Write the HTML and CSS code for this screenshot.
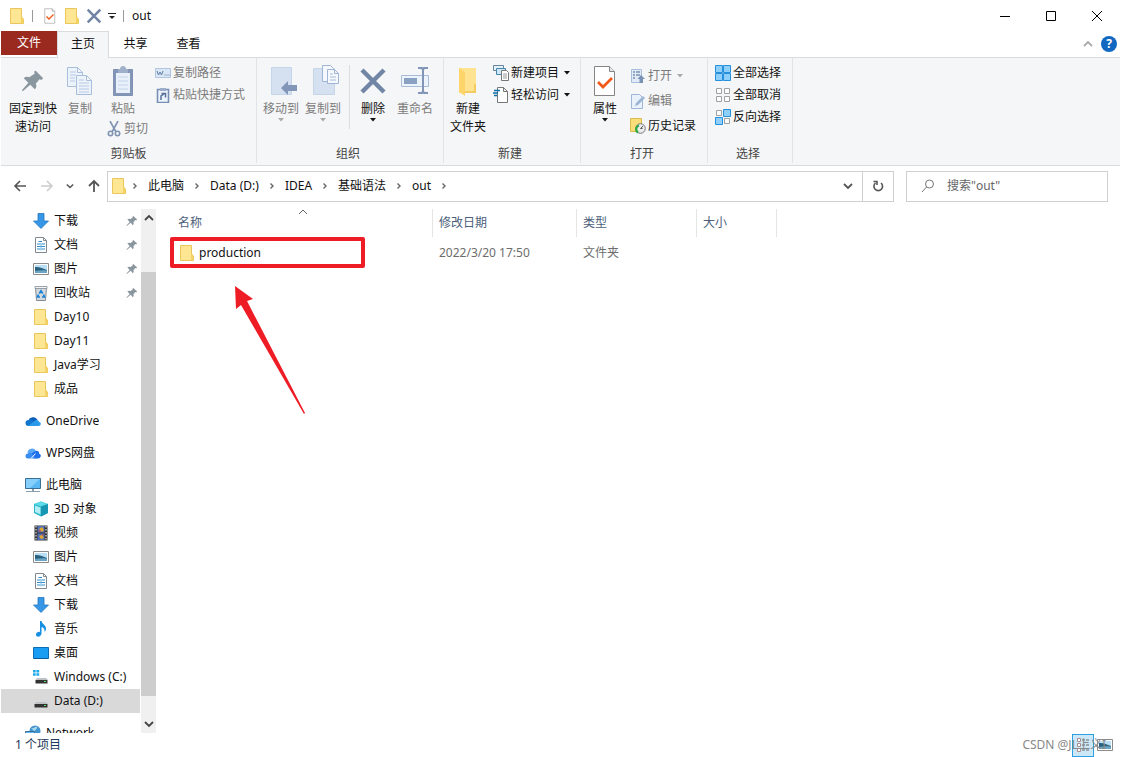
FILE: index.html
```html
<!DOCTYPE html>
<html lang="zh-CN">
<head>
<meta charset="utf-8">
<title>out</title>
<link rel="stylesheet" href="styles.css">
</head>
<body>
<svg class="sprite" aria-hidden="true">
  <symbol id="folder" viewBox="0 0 16 16"><path d="M1.500 .5h11v9l2 1.500v4.500h-13z" fill="#ffe693" stroke="#e9c75c"/><path d="M12 9.500l1.500-.5 1 2v4.500H12z" fill="#f5d264"/></symbol>
  <symbol id="chev-r" viewBox="0 0 8 8"><path d="M2.500 1.500L5 4 2.500 6.500" fill="none" stroke="#666" stroke-width="1.400"/></symbol>
  <symbol id="chev-d" viewBox="0 0 10 10"><path d="M1 3l4 4 4-4" fill="none" stroke="currentColor" stroke-width="1.800"/></symbol>
  <symbol id="chev-u" viewBox="0 0 10 10"><path d="M1 7l4-4 4 4" fill="none" stroke="currentColor" stroke-width="1.800"/></symbol>
  <symbol id="caret" viewBox="0 0 6 4"><path d="M0 0h6L3 3.500z" fill="currentColor"/></symbol>
  <symbol id="pin" viewBox="4 3 26 26"><path d="M20 5l8 8-2 2-2-1-4 5c1 2 1 4-1 6l-5-5-8 7-1-1 7-8-5-5c2-2 4-2 6-1l6-4-1-2z" fill="#8a979e"/></symbol>
  <symbol id="download" viewBox="0 0 16 16"><path d="M5 .5h6V8h4.500L8 15.500.500 8H5z" fill="#3796e6" stroke="#1f77c4" stroke-width=".8"/></symbol>
  <symbol id="doc" viewBox="0 0 16 16"><path d="M2.500.5h8l3 3v12h-11z" fill="#fff" stroke="#808a92"/><path d="M10.500.5v3h3" fill="none" stroke="#808a92"/><path d="M5.500 4.500H9M4 7h3.500M8.500 7H12M4 9.500h8M4 12h3.500M8.500 12H12" stroke="#2f8fce" stroke-width="1.200"/><path d="M8 6v7.500" stroke="#7fbbe2"/></symbol>
  <symbol id="picture" viewBox="0 0 16 16"><path d="M.5 2.500h15v11H.5z" fill="#fff" stroke="#8b8b8b"/><path d="M2 4h12v8H2z" fill="#b9def5"/><path d="M2 6c4-.5 8 1.500 12 3v1H2z" fill="#2b617c"/><path d="M2 10c4-1 8-1 12-.5V12H2z" fill="#6aa5c4"/></symbol>
  <symbol id="bin" viewBox="0 0 16 16"><path d="M2.500 2.500h11L12.500 15.500h-9z" fill="#d3d9de" stroke="#858d94"/><path d="M2 1.500h12v2H2z" fill="#f2f4f5" stroke="#858d94" stroke-width=".8"/><path d="M6.300 8.500L8 5.800l1.700 2.700M10.500 9.500l1 2.500H9M7 12H4.500l1-2.500" fill="none" stroke="#1683d8" stroke-width="1.700"/></symbol>
  <symbol id="onedrive" viewBox="0 0 16 16"><path d="M4 6a5 4.500 0 0 1 8.500 1L5 12z" fill="#0b5eb8"/><path d="M3.500 7c2-1 3.500 0 5 1l2 5h-7A3 3 0 0 1 3.500 7z" fill="#1277d0"/><path d="M3 13l6-4.500C11 6 14 7 14 9c2.500 0 2.500 4-.5 4z" fill="#2a9bea"/></symbol>
  <symbol id="wps" viewBox="0 0 16 16"><path d="M2.500 8A4.500 4.500 0 0 1 11 6L7 10z" fill="#5aa8f6"/><path d="M9.500 6.500c3-2 5 0 4.500 2 3 1 2 5-1 5H9L6 9z" fill="#1f6fea"/><path d="M3 8.500c2-1.500 3.500 0 4.500 1l3.500 4H3a2.500 2.500 0 0 1 0-5z" fill="#3b8cf2"/><path d="M6 13.500l4.500-5" stroke="#fff"/></symbol>
  <symbol id="pc" viewBox="0 0 16 16"><path d="M.5 1.500h15v10H.5z" fill="#5ab8f4" stroke="#3b6e93"/><path d="M1 2h14L5 11H1z" fill="#86cefb"/><path d="M7 12h2v2H7z" fill="#8ba0ad"/><path d="M1 14.500h14" stroke="#8ba0ad"/></symbol>
  <symbol id="cube" viewBox="0 0 16 16"><path d="M1 3l7-2.500L15 3v9l-7 3.500L1 12z" fill="#25b6ca"/><path d="M1 3l7-2.500L15 3 8 5.500z" fill="#5edbe8"/><path d="M8 5.500L15 3v9l-7 3.500z" fill="#1797b4"/><path d="M2 4.500l5.500 2v7L2 11z" fill="#b5edf4"/></symbol>
  <symbol id="video" viewBox="0 0 16 16"><path d="M1.500.5h13v15h-13z" fill="#333"/><path d="M4.500 1h7v6.500h-7zM4.500 8.500h7V15h-7z" fill="#5271b8"/><path d="M6 4l3-2 2 3-2 2zM6 11l3-1 2 3-3 1z" fill="#e3a82b"/><path d="M5 6l2-1 1 2zM9 9l2 1-2 1z" fill="#c94c3d"/><path d="M3 1v14M13 1v14" stroke="#fff" stroke-dasharray="1.500 1.500"/></symbol>
  <symbol id="music" viewBox="0 0 16 16"><path d="M7 0h1.500c.5 3 4.500 4 4.500 7.500 0 1.500-.5 2.500-1.500 3.500.5-3-1-4.500-3-5v6.500C8.500 16 3 17 3 13.500 3 11.500 5.500 10.500 7 11z" fill="#168fe4"/></symbol>
  <symbol id="desktop" viewBox="0 0 16 16"><path d="M.5 2.500h15v11H.5z" fill="#189df3" stroke="#0b6db4"/><path d="M1 13.500h14" stroke="#075b9a"/></symbol>
  <symbol id="drive" viewBox="0 0 16 16"><path d="M3 9h10l2 2H1.500z" fill="#bfc2c4"/><path d="M1.500 11h13v3.500h-13z" fill="#333"/><path d="M11 12.500h2" stroke="#4fe265"/></symbol>
  <symbol id="windrive" viewBox="0 0 16 16"><path d="M0 1h2.700v2.500H0zM3.400 1h2.800v2.500H3.400zM0 4.200h2.700v2.500H0zM3.400 4.200h2.800v2.500H3.400z" fill="#1ba9ea"/><path d="M4 9h9l2 2H2.500z" fill="#bfc2c4"/><path d="M2.500 11h12v3.500h-12z" fill="#333"/><path d="M11 12.500h2" stroke="#4fe265"/></symbol>
  <symbol id="network" viewBox="0 0 16 16"><circle cx="10" cy="6" r="5.500" fill="#4194cf"/><path d="M6 3c3 1 4-2 6-1 1 2-3 3-2 5z" fill="#a6d8e9"/><path d="M.5 6.500h9v6h-9z" fill="#5ab8f4" stroke="#3b6e93"/></symbol>
  <symbol id="page-check" viewBox="0 0 24 32"><path d="M1.500 1.500h15l5 5v24h-20z" fill="#fff" stroke="#858585"/><path d="M16.500 1.500v5h5" fill="#e8e8e8" stroke="#858585"/><path d="M5 17l5 5 9-9" fill="none" stroke="#f15a18" stroke-width="2.800"/></symbol>
  <symbol id="cross" viewBox="0 0 28 28"><path d="M3 3l22 22M25 3L3 25" fill="none" stroke="#7185a5" stroke-width="4.500"/></symbol>
  <symbol id="copy" viewBox="0 0 26 32"><g fill="#edf3fb" stroke="#a9bedc"><path d="M.5 2.500h10l5 5v14H.5zM10.500 2.500v5h5"/><path d="M9.500 10.500h10l5 5v14h-15zM19.500 10.500v5h5"/></g><path d="M3 7h6M3 10h6M3 13h5M3 16h5M12 15h5M12 18h10M12 21h10M12 24h10M12 27h10" stroke="#b8cae3"/></symbol>
  <symbol id="paste" viewBox="0 0 22 32"><path d="M1.500 4.500h19v26h-19z" fill="#8396b8" stroke="#7f92b3"/><path d="M4 8h14v20H4z" fill="#e8f0fa"/><path d="M6 4h2c0-4 6-4 6 0h2v4H6z" fill="#9eafc9"/><path d="M6 12h10M6 16h10M6 20h10M6 24h10" stroke="#c4d3e8"/></symbol>
  <symbol id="scissors" viewBox="0 0 16 16"><path d="M4 0l6 11M12 0L6 11" stroke="#7f94b2" stroke-width="1.600"/><g fill="none" stroke="#7f94b2" stroke-width="1.600"><circle cx="4.500" cy="12.500" r="2.200"/><circle cx="11.500" cy="12.500" r="2.200"/></g></symbol>
  <symbol id="path" viewBox="0 0 16 16"><path d="M.5 3.500h15v9H.5z" fill="#d9e6f5" stroke="#b3c5de"/><path d="M2 6l1.500 4L5 7l1.500 3L8 6M9.500 10h1M11.500 10h1M13.500 10h1" fill="none" stroke="#647fa7"/></symbol>
  <symbol id="shortcut" viewBox="0 0 16 16"><path d="M2.500 2.500h11v13h-11z" fill="#eef4fb" stroke="#788fb5" stroke-width="1.600"/><path d="M5 1h6v3H5z" fill="#9caccb"/><path d="M6 13V9l3-2M6.500 6.500h4v4" fill="none" stroke="#56709b" stroke-width="1.500"/></symbol>
  <symbol id="move" viewBox="-5 0 32 32"><path d="M1.500 2.500h20v27h-20z" fill="#d5e1f1" stroke="#c6d6ea"/><path d="M11 23l7-7v4h9v6h-9v4z" fill="#8296b7"/></symbol>
  <symbol id="copyto" viewBox="-5 0 32 32"><path d="M1.500 3.500h21v26h-21z" fill="#d5e1f1" stroke="#c6d6ea"/><g fill="#f5f9ff" stroke="#9fb5d6"><path d="M10.500.5h8l3 3v13h-11z"/><path d="M15.500 4.500h7l4 4v10h-11zM22.500 4.500v4h4"/></g><path d="M18 9h3M18 12h6M18 15h6" stroke="#a8bbd7"/></symbol>
  <symbol id="rename" viewBox="-1 0 30 32"><path d="M.5 10.500h27v11H.5z" fill="#edf3fb" stroke="#a8bcda"/><path d="M3 13h13v6H3z" fill="#8ba1c3"/><path d="M17 3h4l1 2 1-2h4M17 28h4l1-2 1 2h4M22 4v23" fill="none" stroke="#8095b8" stroke-width="2"/></symbol>
  <symbol id="bigfolder" viewBox="0 0 20 32"><path d="M1 3h17v25H1z" fill="#ffe391"/><path d="M1 3l6 4v24l-6-4z" fill="#ffd56b"/><path d="M16 18l2 2v8H7v-2h9z" fill="#f4cb5f"/></symbol>
  <symbol id="newitem" viewBox="0 0 16 16"><path d="M.5.500h10v5H.5z" fill="#e5f2fa" stroke="#67859a"/><path d="M3.500 3.500h9v6h-9z" fill="#cfe7f6" stroke="#4187ae"/><path d="M8.500 5.500h5l2 2v8h-7z" fill="#fff" stroke="#777"/><path d="M10 9h4M10 11h4M10 13h4" stroke="#999"/></symbol>
  <symbol id="easy" viewBox="0 0 16 16"><path d="M4.500.500h6l4 4v11h-10zM10.500.500v4h4" fill="#fff" stroke="#777"/><path d="M1 3.500h6M0 6h5M1 8.500h3" stroke="#0c6fa9" stroke-width="1.300"/></symbol>
  <symbol id="open" viewBox="0 0 16 16"><path d="M1.500 1.500h10v13h-10z" fill="#e1ebf7" stroke="#a8bddb"/><path d="M3 4h2M3 7h2M3 10h2M6 4h4M6 7h4" stroke="#7991b4" stroke-width="1.400"/><path d="M9.500 15v-4h-2l3.500-4 4 4h-2v4z" fill="#7991b4"/></symbol>
  <symbol id="edit" viewBox="0 0 16 16"><path d="M1.500 1.500h8l3 3v11h-11z" fill="#e9f1fb" stroke="#9fb6d8"/><path d="M5 13l1-3 7-7 2 2-7 7z" fill="#9db5d5"/></symbol>
  <symbol id="history" viewBox="0 0 16 16"><path d="M.5.500h11v13H.5z" fill="#f8dd78" stroke="#d9bb4d"/><circle cx="10.500" cy="10.500" r="4.800" fill="#ececec" stroke="#777"/><path d="M10.500 10.500L13 8M10.500 10.500h2" stroke="#555"/><path d="M8 14.500c-3-2-2-6 1-7" fill="none" stroke="#2aaa43" stroke-width="2.200"/></symbol>
  <symbol id="selall" viewBox="0 0 16 16"><path d="M.5.500h7v7h-7zM8.500.500h7v7h-7zM.5 8.500h7v7h-7zM8.500 8.500h7v7h-7z" fill="#8fd0fb" stroke="#2790dd"/></symbol>
  <symbol id="selnone" viewBox="0 0 16 16"><path d="M1.500 1.500h5v5h-5zM9.500 1.500h5v5h-5zM1.500 9.500h5v5h-5zM9.500 9.500h5v5h-5z" fill="#fff" stroke="#a0a0a0"/></symbol>
  <symbol id="selinv" viewBox="0 0 16 16"><path d="M1.500 1.500h5v5h-5zM9.500 9.500h5v5h-5z" fill="#fff" stroke="#a0a0a0"/><path d="M8.500.500h7v7h-7zM.5 8.500h7v7h-7z" fill="#8fd0fb" stroke="#2790dd"/></symbol>
</svg>

<div class="window">
  <header class="titlebar">
    <svg class="i16"><use href="#folder"/></svg>
    <span class="divider"></span>
    <div class="quick">
      <button aria-label="属性"><svg class="i16"><use href="#page-check"/></svg></button>
      <button aria-label="新建文件夹"><svg class="i16"><use href="#folder"/></svg></button>
      <button aria-label="删除"><svg class="i16"><use href="#cross"/></svg></button>
      <button aria-label="自定义"><svg class="i8" viewBox="0 0 8 8"><path d="M0 1.500h8" stroke="#222"/><path d="M1 4h6L4 7z" fill="#222"/></svg></button>
    </div>
    <span class="divider"></span>
    <h1 class="title">out</h1>
    <div class="winctl">
      <button aria-label="最小化"><svg class="i12" viewBox="0 0 12 12"><path d="M1 6.500h10" stroke="#000"/></svg></button>
      <button aria-label="最大化"><svg class="i12" viewBox="0 0 12 12"><path d="M1.500 1.500h9v9h-9z" fill="none" stroke="#000"/></svg></button>
      <button aria-label="关闭"><svg class="i12" viewBox="0 0 12 12"><path d="M1 1l10 10M11 1L1 11" stroke="#000"/></svg></button>
    </div>
  </header>

  <nav class="tabs">
    <button class="tab file">文件</button>
    <button class="tab active">主页</button>
    <button class="tab">共享</button>
    <button class="tab">查看</button>
    <div class="tabs-end">
      <button class="collapse" aria-label="折叠"><svg class="i10"><use href="#chev-u"/></svg></button>
      <button class="help" aria-label="帮助">?</button>
    </div>
  </nav>

  <section class="ribbon">
    <div class="group clip">
      <div class="tools">
        <button class="big wide"><svg class="i24"><use href="#pin"/></svg><span>固定到快<br>速访问</span></button>
        <button class="big narrow dim"><svg class="i32"><use href="#copy"/></svg><span>复制</span></button>
        <div class="stack">
          <button class="big dim"><svg class="i32"><use href="#paste"/></svg><span>粘贴</span></button>
          <button class="small dim"><svg class="i16"><use href="#scissors"/></svg>剪切</button>
        </div>
        <div class="list">
          <button class="small dim"><svg class="i16"><use href="#path"/></svg>复制路径</button>
          <button class="small dim"><svg class="i16"><use href="#shortcut"/></svg>粘贴快捷方式</button>
        </div>
      </div>
      <h2>剪贴板</h2>
    </div>
    <div class="group org">
      <div class="tools">
        <button class="big dim"><svg class="i32"><use href="#move"/></svg><span>移动到</span><svg class="caret"><use href="#caret"/></svg></button>
        <button class="big dim"><svg class="i32"><use href="#copyto"/></svg><span>复制到</span><svg class="caret"><use href="#caret"/></svg></button>
        <span class="rule"></span>
        <button class="big"><svg class="i28"><use href="#cross"/></svg><span>删除</span><svg class="caret"><use href="#caret"/></svg></button>
        <button class="big dim"><svg class="i32"><use href="#rename"/></svg><span>重命名</span></button>
      </div>
      <h2>组织</h2>
    </div>
    <div class="group new">
      <div class="tools">
        <button class="big"><svg class="i32"><use href="#bigfolder"/></svg><span>新建<br>文件夹</span></button>
        <div class="list">
          <button class="small"><svg class="i16"><use href="#newitem"/></svg>新建项目<svg class="caret"><use href="#caret"/></svg></button>
          <button class="small"><svg class="i16"><use href="#easy"/></svg>轻松访问<svg class="caret"><use href="#caret"/></svg></button>
        </div>
      </div>
      <h2>新建</h2>
    </div>
    <div class="group opn">
      <div class="tools">
        <button class="big"><svg class="i32"><use href="#page-check"/></svg><span>属性</span><svg class="caret"><use href="#caret"/></svg></button>
        <div class="list loose">
          <button class="small dim"><svg class="i16"><use href="#open"/></svg>打开<svg class="caret"><use href="#caret"/></svg></button>
          <button class="small dim"><svg class="i16"><use href="#edit"/></svg>编辑</button>
          <button class="small"><svg class="i16"><use href="#history"/></svg>历史记录</button>
        </div>
      </div>
      <h2>打开</h2>
    </div>
    <div class="group sel">
      <div class="tools">
        <div class="list">
          <button class="small"><svg class="i16"><use href="#selall"/></svg>全部选择</button>
          <button class="small"><svg class="i16"><use href="#selnone"/></svg>全部取消</button>
          <button class="small"><svg class="i16"><use href="#selinv"/></svg>反向选择</button>
        </div>
      </div>
      <h2>选择</h2>
    </div>
  </section>

  <section class="navbar">
    <div class="history">
      <button aria-label="后退"><svg class="i14" viewBox="0 0 14 14"><path d="M13 7H2M7 2L2 7l5 5" fill="none" stroke="#555" stroke-width="1.600"/></svg></button>
      <button aria-label="前进"><svg class="i14" viewBox="0 0 14 14"><path d="M1 7h11M7 2l5 5-5 5" fill="none" stroke="#ccc" stroke-width="1.600"/></svg></button>
      <button aria-label="最近位置"><svg class="i8"><use href="#chev-d"/></svg></button>
      <button aria-label="向上"><svg class="i14" viewBox="0 0 14 14"><path d="M7 13V2M2 7l5-5 5 5" fill="none" stroke="#555" stroke-width="1.800"/></svg></button>
    </div>
    <div class="address">
      <svg class="i16"><use href="#folder"/></svg>
      <svg class="sep first"><use href="#chev-r"/></svg>
      <button>此电脑</button><svg class="sep"><use href="#chev-r"/></svg>
      <button>Data (D:)</button><svg class="sep"><use href="#chev-r"/></svg>
      <button>IDEA</button><svg class="sep"><use href="#chev-r"/></svg>
      <button>基础语法</button><svg class="sep"><use href="#chev-r"/></svg>
      <button>out</button><svg class="sep"><use href="#chev-r"/></svg>
      <button class="drop" aria-label="历史"><svg class="i10"><use href="#chev-d"/></svg></button>
      <button class="refresh" aria-label="刷新"><svg class="i12" viewBox="0 0 12 12"><path d="M9 3A4.300 4.300 0 1 1 3.500 3M1.500 1.500h3.500v3.500" fill="none" stroke="#555" stroke-width="1.600"/></svg></button>
    </div>
    <label class="search">
      <svg class="i14" viewBox="0 0 14 14"><circle cx="8.500" cy="5" r="4" fill="none" stroke="#777"/><path d="M5.500 8L1 13" stroke="#777"/></svg>
      <input type="search" aria-label="搜索" placeholder="搜索&quot;out&quot;">
    </label>
  </section>

  <div class="body">
    <nav class="tree">
      <ul>
        <li><a href="#"><svg class="i16"><use href="#download"/></svg>下载<svg class="i12 pinned"><use href="#pin"/></svg></a></li>
        <li><a href="#"><svg class="i16"><use href="#doc"/></svg>文档<svg class="i12 pinned"><use href="#pin"/></svg></a></li>
        <li><a href="#"><svg class="i16"><use href="#picture"/></svg>图片<svg class="i12 pinned"><use href="#pin"/></svg></a></li>
        <li><a href="#"><svg class="i16"><use href="#bin"/></svg>回收站<svg class="i12 pinned"><use href="#pin"/></svg></a></li>
        <li><a href="#"><svg class="i16"><use href="#folder"/></svg>Day10</a></li>
        <li><a href="#"><svg class="i16"><use href="#folder"/></svg>Day11</a></li>
        <li><a href="#"><svg class="i16"><use href="#folder"/></svg>Java学习</a></li>
        <li><a href="#"><svg class="i16"><use href="#folder"/></svg>成品</a></li>
      </ul>
      <ul class="root"><li><a href="#"><svg class="i16"><use href="#onedrive"/></svg>OneDrive</a></li></ul>
      <ul class="root"><li><a href="#"><svg class="i16"><use href="#wps"/></svg>WPS网盘</a></li></ul>
      <ul class="root">
        <li><a href="#"><svg class="i16"><use href="#pc"/></svg>此电脑</a>
          <ul>
            <li><a href="#"><svg class="i16"><use href="#cube"/></svg>3D 对象</a></li>
            <li><a href="#"><svg class="i16"><use href="#video"/></svg>视频</a></li>
            <li><a href="#"><svg class="i16"><use href="#picture"/></svg>图片</a></li>
            <li><a href="#"><svg class="i16"><use href="#doc"/></svg>文档</a></li>
            <li><a href="#"><svg class="i16"><use href="#download"/></svg>下载</a></li>
            <li><a href="#"><svg class="i16"><use href="#music"/></svg>音乐</a></li>
            <li><a href="#"><svg class="i16"><use href="#desktop"/></svg>桌面</a></li>
            <li><a href="#"><svg class="i16"><use href="#windrive"/></svg>Windows (C:)</a></li>
            <li><a href="#" class="current"><svg class="i16"><use href="#drive"/></svg>Data (D:)</a></li>
          </ul>
        </li>
      </ul>
      <ul class="root"><li><a href="#"><svg class="i16"><use href="#network"/></svg>Network</a></li></ul>
    </nav>
    <div class="scroll">
      <button aria-label="向上滚动"><svg class="i10"><use href="#chev-u"/></svg></button>
      <div class="track"><div class="thumb"></div></div>
      <button aria-label="向下滚动"><svg class="i10"><use href="#chev-d"/></svg></button>
    </div>
    <main class="files">
      <table>
        <colgroup><col class="c-name"><col class="c-date"><col class="c-type"><col class="c-size"></colgroup>
        <thead><tr><th>名称<svg class="i10 sorted" viewBox="0 0 10 10"><path d="M1 7l4-4 4 4" fill="none" stroke="#666"/></svg></th><th>修改日期</th><th>类型</th><th>大小</th></tr></thead>
        <tbody><tr><td><a href="#"><svg class="i16"><use href="#folder"/></svg>production</a></td><td>2022/3/20 17:50</td><td>文件夹</td><td></td></tr></tbody>
      </table>
      <div class="mark"></div>
      <svg class="arrow" viewBox="0 0 72 130"><path d="M1 1l18 13-6 2 58 112-1 1L7 20l-5 4z" fill="#ee1c25"/></svg>
    </main>
  </div>

  <footer class="status">
    <span>1 个项目</span>
    <div class="views">
      <button class="on" aria-label="详细信息"><svg class="i16" viewBox="0 0 16 16"><path d="M2.500 1.500h3v3h-3zM2.500 6.500h3v3h-3zM2.500 11.500h3v3h-3z" fill="#fff" stroke="#a98d8d"/><path d="M7 3h3M11 3h3M7 8h3M11 8h3M7 13h3M11 13h3" stroke="#666"/></svg></button>
      <button aria-label="大图标"><svg class="i16"><use href="#picture"/></svg></button>
    </div>
    <span class="credit">CSDN @JL上义I</span>
  </footer>
</div>
</body>
</html>
```
FILE: styles.css
```css
* { box-sizing: border-box; }
html, body { height: 100%; margin: 0; }
body {
  background: #fff;
  color: #111;
  font: 12px/18px "Noto Sans", "Noto Sans CJK SC", sans-serif;
}
button {
  display: flex;
  align-items: center;
  justify-content: center;
  padding: 0;
  border: 0;
  background: none;
  color: inherit;
  font: inherit;
  white-space: nowrap;
}
a { color: inherit; text-decoration: none; }
ul { margin: 0; padding: 0; list-style: none; }
h1, h2 { margin: 0; font: inherit; }
svg { display: block; flex: none; }
.sprite { position: absolute; width: 0; height: 0; }
.i8 { width: 8px; height: 8px; }
.i10 { width: 10px; height: 10px; }
.i12 { width: 12px; height: 12px; }
.i14 { width: 14px; height: 14px; }
.i16 { width: 16px; height: 16px; }
.i24 { width: 24px; height: 32px; }
.i28 { width: 28px; height: 32px; }
.i32 { width: 32px; height: 32px; }
.caret { width: 6px; height: 4px; }

.window { display: flex; flex-direction: column; height: 100vh; padding: 0 1px; }

.titlebar { display: flex; align-items: center; height: 31px; padding-left: 8px; }
.divider { width: 1px; height: 12px; margin: 0 8px 0 7px; background: #999; }
.quick { display: flex; gap: 6px; padding-left: 1px; }
.title { flex: 1; }
.winctl { display: flex; }
.winctl button { width: 46px; height: 31px; }

.tabs { display: flex; height: 27px; border-bottom: 1px solid #dadbdc; }
.tab { width: 53px; height: 26px; }
.tab.file { width: 56px; height: 24px; background: #9a2a20; color: #fff; }
.tab.active { width: 52px; height: 27px; padding-bottom: 2px; border: 1px solid #dadbdc; border-bottom: 0; background: #f5f6f7; }
.tabs-end { display: flex; flex: 1; align-items: center; justify-content: flex-end; gap: 8px; padding-right: 3px; }
.collapse { color: #aaa; }
.help { width: 16px; height: 16px; border-radius: 50%; background: #1268c0; color: #fff; font-weight: bold; }

.ribbon { display: flex; height: 108px; padding-bottom: 2px; border-bottom: 1px solid #dadbdc; background: #f5f6f7; }
.group { display: flex; flex-direction: column; border-right: 1px solid #e2e3e4; }
.clip { width: 256px; }
.org { width: 187px; }
.new { width: 137px; }
.opn { width: 127px; }
.sel { width: 85px; }
.group h2 { color: #444; text-align: center; }
.tools { display: flex; flex: 1; padding: 7px 0 0 3px; }
.clip .tools { padding-left: 0; }
.sel .tools { padding-left: 7px; }
.org h2, .new h2, .opn h2, .sel h2 { padding-right: 4px; }
.big { flex-direction: column; justify-content: flex-start; width: 42px; height: fit-content; }
.big svg + span { padding-top: 3px; }
.big.wide { width: 64px; }
.big.narrow { width: 30px; }
.dim { color: #7c7c7c; }
.dim .caret { color: #aaa; }
.stack { display: flex; flex-direction: column; align-items: center; width: 56px; }
.stack .small { align-self: flex-end; margin: 0 3px 0 0; }
.list { display: flex; flex-direction: column; align-items: flex-start; margin-top: -3px; padding-left: 4px; }
.sel .list { padding-left: 0; }
.new .list { padding-left: 4px; }
.small { gap: 2px; height: 22px; }
.small .caret { margin-left: 3px; }
.list.loose { gap: 3px; padding-top: 3px; }
.rule { width: 1px; height: 64px; margin: 0 2px 0 5px; background: #dcdddf; }

.navbar { display: flex; align-items: center; gap: 6px; height: 42px; padding: 0 12px 2px 0; }
.history { display: flex; align-items: center; justify-content: space-between; width: 100px; padding-left: 12px; color: #555; }
.address { display: flex; flex: 1; align-items: center; height: 31px; padding-left: 3px; border: 1px solid #d0d0d0; }
.sep { width: 8px; height: 8px; margin: 0 9px; }
.sep.first { margin-left: 4px; }
.drop { width: 28px; height: 29px; margin-left: auto; color: #555; }
.refresh { width: 31px; height: 29px; border-left: 1px solid #d0d0d0; }
.search { display: flex; align-items: center; gap: 12px; width: 202px; height: 31px; margin-left: 6px; padding-left: 14px; border: 1px solid #d0d0d0; }
.search input { flex: 1; min-width: 0; padding: 0; border: 0; outline: 0; background: none; color: #666; font: inherit; }
.search input::placeholder { color: #666; opacity: 1; }

.body { display: flex; flex: 1; min-height: 0; padding-top: 1px; }
.tree { width: 139px; overflow: hidden; }
.tree a { display: flex; align-items: center; gap: 5px; height: 24px; padding-left: 32px; white-space: nowrap; }
.tree .root > li > a { padding-left: 24px; }
.tree .root ul a { padding-left: 32px; }
.root { margin-top: 8px; }
.tree a.current { background: #d9d9d9; }
.pinned { margin: 0 2px 0 auto; }
.scroll { display: flex; flex-direction: column; width: 17px; padding: 0 1px; }
.scroll button { width: 15px; height: 18px; background: #f0f0f0; color: #444; }
.track { flex: 1; padding-top: 45px; padding-bottom: 19px; background: #f0f0f0; }
.thumb { height: 100%; background: #cdcdcd; }
.files { position: relative; flex: 1; padding-left: 13px; }
.files table { width: 607px; border-collapse: separate; border-spacing: 0; table-layout: fixed; }
.c-name { width: 263px; }
.c-date { width: 144px; }
.c-type { width: 120px; }
.c-size { width: 80px; }
.files th { position: relative; height: 28px; padding: 0 6px; border-right: 1px solid #e5e5e5; color: #4c607a; font-weight: normal; text-align: left; }
.files td { height: 32px; padding: 0 6px; color: #6d6d6d; }
.files th:first-child { padding-left: 8px; }
.files td:first-child { padding-left: 9px; }
.files td a { display: flex; align-items: center; gap: 4px; color: #111; }
.sorted { position: absolute; top: -2px; left: 128px; }
.mark { position: absolute; top: 28px; left: 13px; width: 195px; height: 31px; border: 4px solid #ee1c25; border-radius: 2px; }
.arrow { position: absolute; top: 76px; left: 77px; width: 72px; height: 130px; }

.status { position: relative; display: flex; align-items: center; justify-content: space-between; height: 24px; padding: 0 7px 0 14px; color: #1e395b; }
.views { display: flex; gap: 3px; }
.views button { width: 16px; height: 23px; }
.views .on { width: 22px; border: 1px solid #2ca0e0; background: #cce8f8; }
.credit { position: absolute; right: 14px; color: #888; }
```
